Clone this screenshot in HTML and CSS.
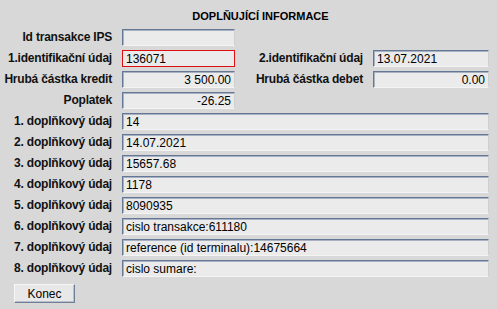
FILE: index.html
```html
<!DOCTYPE html>
<html lang="cs">
<head>
    <meta charset="UTF-8">
    <meta name="viewport" content="width=device-width, initial-scale=1.0">
    <title>Doplňující informace</title>
    <link rel="stylesheet" href="styles.css">
</head>
<body>
    <div class="dialog">
        <div class="title">DOPLŇUJÍCÍ INFORMACE</div>
        <div class="form">
            <label class="lbl">Id transakce IPS</label>
            <div class="field"></div>
            <span></span><span></span>

            <label class="lbl">1.identifikační údaj</label>
            <div class="field active">136071</div>
            <label class="lbl">2.identifikační údaj</label>
            <div class="field">13.07.2021</div>

            <label class="lbl">Hrubá částka kredit</label>
            <div class="field num">3 500.00</div>
            <label class="lbl">Hrubá částka debet</label>
            <div class="field num">0.00</div>

            <label class="lbl">Poplatek</label>
            <div class="field num">-26.25</div>
            <span></span><span></span>

            <label class="lbl">1. doplňkový údaj</label>
            <div class="field wide">14</div>
            <label class="lbl">2. doplňkový údaj</label>
            <div class="field wide">14.07.2021</div>
            <label class="lbl">3. doplňkový údaj</label>
            <div class="field wide">15657.68</div>
            <label class="lbl">4. doplňkový údaj</label>
            <div class="field wide">1178</div>
            <label class="lbl">5. doplňkový údaj</label>
            <div class="field wide">8090935</div>
            <label class="lbl">6. doplňkový údaj</label>
            <div class="field wide">cislo transakce:611180</div>
            <label class="lbl">7. doplňkový údaj</label>
            <div class="field wide">reference (id terminalu):14675664</div>
            <label class="lbl">8. doplňkový údaj</label>
            <div class="field wide">cislo sumare:</div>
        </div>
        <div class="buttons">
            <button class="btn" onclick="window.close()">Konec</button>
        </div>
    </div>
</body>
</html>
```

FILE: styles.css
```css
body {
    margin: 0;
    padding: 0;
    background: #d8d8d8;
    font-family: "Liberation Sans", Arial, sans-serif;
    font-size: 12px;
    color: #000;
}
.dialog {
    width: 497px;
    height: 309px;
    padding-top: 9px;
    box-sizing: border-box;
}
.title {
    font-weight: bold;
    font-size: 11px;
    text-align: center;
    line-height: 14px;
    padding-left: 24px;
    height: 14px;
    margin-bottom: 6px;
}
.form {
    display: grid;
    grid-template-columns: 112px 113px 118px 116px;
    grid-auto-rows: 17px;
    column-gap: 10px;
    row-gap: 4px;
}
.lbl {
    font-weight: bold;
    text-align: right;
    line-height: 17px;
    letter-spacing: -0.2px;
    white-space: nowrap;
    color: #111;
}
.field {
    box-sizing: border-box;
    height: 17px;
    line-height: 14px;
    padding: 1px 3px 0 3px;
    background: #ebebeb;
    border: 1px solid;
    border-color: #647896 #cfcfcf #f4f4f4 #647896;
    box-shadow: inset 1px 1px 0 #a7b1c1;
    white-space: nowrap;
    overflow: hidden;
}
.field.active {
    border-color: #e01010;
    box-shadow: none;
}
.field.num {
    text-align: right;
}
.field.wide {
    grid-column: 2 / 5;
}
.buttons {
    padding: 7px 0 0 14px;
}
.btn {
    width: 61px;
    height: 19px;
    padding: 0;
    font-family: "Liberation Sans", Arial, sans-serif;
    font-size: 12px;
    color: #000;
    background: #e8e8e8;
    border: 1px solid;
    border-color: #f6f6f6 #6f7f98 #6f7f98 #f6f6f6;
    box-shadow: inset -1px -1px 0 #b9c0cb;
    cursor: pointer;
}
```
